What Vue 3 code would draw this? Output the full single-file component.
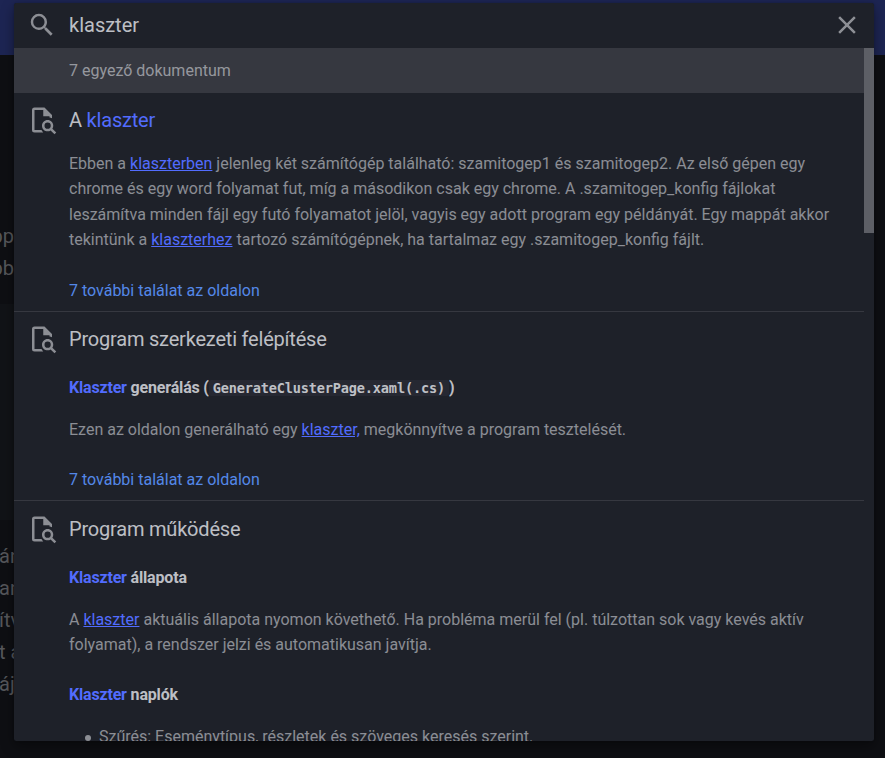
<script setup>
const fileIcon =
  'M14 2H6a2 2 0 0 0-2 2v16a2 2 0 0 0 2 2h7c-.57-.59-1.04-1.26-1.41-2H6V4h7v5h5v1c.7.1 1.37.28 2 .58V8l-6-6m6.31 16.9c.44-.69.69-1.52.69-2.4 0-2.5-2-4.5-4.5-4.5S12 14 12 16.5s2 4.5 4.5 4.5c.87 0 1.69-.25 2.38-.68L22 23.39 23.39 22l-3.08-3.1m-3.81.1a2.5 2.5 0 0 1-2.5-2.5 2.5 2.5 0 0 1 2.5-2.5 2.5 2.5 0 0 1 2.5 2.5 2.5 2.5 0 0 1-2.5 2.5Z'
</script>

<template>
  <div class="page">
    <div class="topbar"></div>
    <div class="content">
      <p class="behind upper"><span>pp</span><span>bb</span></p>
      <div class="block"></div>
      <p class="behind lower">
        <span>án</span><span>an</span><span>ítv</span><span>t a</span><span>áj</span>
      </p>
    </div>
    <div class="dialog">
      <div class="form">
        <svg class="icon" viewBox="0 0 24 24"><path d="M9.5 3A6.5 6.5 0 0 1 16 9.5c0 1.61-.59 3.09-1.56 4.23l.27.27h.79l5 5-1.5 1.5-5-5v-.79l-.27-.27A6.516 6.516 0 0 1 9.5 16 6.5 6.5 0 0 1 3 9.5 6.5 6.5 0 0 1 9.5 3m0 2C7 5 5 7 5 9.5S7 14 9.5 14 14 12 14 9.5 12 5 9.5 5Z" /></svg>
        <span class="query">klaszter</span>
        <svg class="icon" viewBox="0 0 24 24"><path d="M19 6.41 17.59 5 12 10.59 6.41 5 5 6.41 10.59 12 5 17.59 6.41 19 12 13.41 17.59 19 19 17.59 13.41 12 19 6.41Z" /></svg>
      </div>
      <div class="output">
        <div class="results">
          <div class="meta">7 egyező dokumentum</div>
          <section class="item">
            <svg class="icon" viewBox="0 0 24 24"><path :d="fileIcon" /></svg>
            <article>
              <h1>A <mark>klaszter</mark></h1>
              <p>
                Ebben a <mark class="u">klaszterben</mark> jelenleg két számítógép található: szamitogep1 és szamitogep2. Az első gépen egy<br />
                chrome és egy word folyamat fut, míg a másodikon csak egy chrome. A .szamitogep_konfig fájlokat<br />
                leszámítva minden fájl egy futó folyamatot jelöl, vagyis egy adott program egy példányát. Egy mappát akkor<br />
                tekintünk a <mark class="u">klaszterhez</mark> tartozó számítógépnek, ha tartalmaz egy .szamitogep_konfig fájlt.
              </p>
              <div class="more">7 további találat az oldalon</div>
            </article>
          </section>
          <section class="item">
            <svg class="icon" viewBox="0 0 24 24"><path :d="fileIcon" /></svg>
            <article>
              <h1>Program szerkezeti felépítése</h1>
              <h2><mark>Klaszter</mark> generálás (<code>GenerateClusterPage.xaml(.cs)</code>)</h2>
              <p>Ezen az oldalon generálható egy <mark class="u">klaszter,</mark> megkönnyítve a program tesztelését.</p>
              <div class="more">7 további találat az oldalon</div>
            </article>
          </section>
          <section class="item">
            <svg class="icon" viewBox="0 0 24 24"><path :d="fileIcon" /></svg>
            <article>
              <h1>Program működése</h1>
              <h2><mark>Klaszter</mark> állapota</h2>
              <p>
                A <mark class="u">klaszter</mark> aktuális állapota nyomon követhető. Ha probléma merül fel (pl. túlzottan sok vagy kevés aktív<br />
                folyamat), a rendszer jelzi és automatikusan javítja.
              </p>
              <h2 class="next"><mark>Klaszter</mark> naplók</h2>
              <ul>
                <li>Szűrés: Eseménytípus, részletek és szöveges keresés szerint.</li>
              </ul>
            </article>
          </section>
        </div>
        <div class="track"><div class="thumb"></div></div>
      </div>
    </div>
  </div>
</template>

<style>
body {
  background: #0e0f13;
}
</style>

<style scoped>
.page {
  position: relative;
  height: 758px;
  overflow: hidden;
  background: #0e0f13;
  font-family: Roboto, "Liberation Sans", sans-serif;
  color: rgba(226, 228, 233, 0.82);
}
.topbar {
  height: 55px;
  background: #1d2553;
}
.content {
  width: 14px;
  padding-top: 165px;
}
.behind {
  display: flex;
  flex-direction: column;
  margin: 0;
  font-size: 20px;
  line-height: 32px;
  color: #56575b;
  white-space: pre;
}
.upper {
  align-items: flex-end;
}
.lower {
  margin-left: -1px;
}
.block {
  height: 216px;
  margin: 20px 0;
  background: #111317;
}
.dialog {
  position: absolute;
  top: 3px;
  left: 14px;
  width: 860px;
  height: 738px;
  display: flex;
  flex-direction: column;
  overflow: hidden;
  border-radius: 2.5px;
  background: #1e2129;
  box-shadow: 0 5px 12.5px rgba(0, 0, 0, 0.4), 0 0 1.25px rgba(0, 0, 0, 0.35);
}
.icon {
  flex: none;
  width: 30px;
  height: 30px;
  fill: #8c8e94;
}
.form {
  flex: none;
  box-sizing: border-box;
  height: 45px;
  display: flex;
  align-items: center;
  padding: 0 12px 2px 12.5px;
}
.query {
  flex: 1;
  padding-left: 12.5px;
  font-size: 20px;
}
.output {
  flex: 1;
  min-height: 0;
  display: flex;
}
.results {
  width: 850px;
  overflow: hidden;
}
.track {
  width: 10px;
}
.thumb {
  height: 185px;
  background: #5d5f66;
}
.meta {
  padding-left: 55px;
  font-size: 16px;
  line-height: 45px;
  background: #363840;
  color: rgba(226, 228, 233, 0.56);
}
.item {
  display: flex;
  align-items: flex-start;
  padding-left: 12.5px;
  border-bottom: 1px solid #363840;
}
.item:last-child {
  padding-top: 0.7px;
}
.item .icon {
  margin: 12px 12.5px 0 0;
}
article {
  flex: 1;
  white-space: nowrap;
  font-size: 16px;
  line-height: 25.6px;
  color: rgba(226, 228, 233, 0.56);
}
h1 {
  margin: 13px 0 16px;
  font-size: 20px;
  font-weight: 400;
  line-height: 28px;
  letter-spacing: -0.2px;
  color: rgba(226, 228, 233, 0.82);
}
h2 {
  margin: 22px 0 16px;
  font-size: 16px;
  font-weight: 700;
  line-height: 25.6px;
  letter-spacing: -0.18px;
  color: rgba(226, 228, 233, 0.82);
}
h2.next {
  margin-top: 24px;
}
p {
  margin: 16px 0;
}
h1 + p {
  margin: 16.6px 0 15.8px;
}
mark {
  background: none;
  color: #526cfe;
}
.u {
  text-decoration: underline;
}
code {
  padding: 0 4px;
  border-radius: 2.5px;
  background: #262832;
  font-family: "DejaVu Sans Mono", "Liberation Mono", monospace;
  font-size: 13.6px;
  letter-spacing: -0.18px;
}
.more {
  padding: 12px 0 11px;
  line-height: 19px;
  color: #5488e8;
}
h2 + p + .more {
  margin-top: -0.7px;
}
ul {
  margin: 16.7px 0;
  padding-left: 16px;
  list-style: none;
}
li {
  display: flex;
  align-items: center;
  gap: 8px;
}
li::before {
  content: "";
  width: 6px;
  height: 6px;
  margin-top: 2px;
  border-radius: 50%;
  background: #8c8e94;
}
</style>
